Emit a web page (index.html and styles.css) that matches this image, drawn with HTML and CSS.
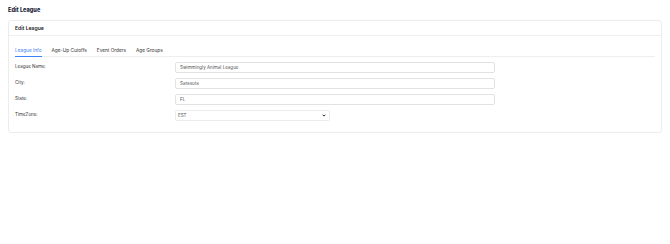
FILE: index.html
```html
<!DOCTYPE html>
<html>
<head>
<meta charset="utf-8">
<link rel="stylesheet" href="styles.css">
</head>
<body>
<h1 class="page-title">Edit League</h1>
<div class="card">
  <div class="card-header">Edit League</div>
  <div class="card-body">
    <div class="tabs">
      <span class="tab active">League Info</span>
      <span class="tab">Age-Up Cutoffs</span>
      <span class="tab">Event Orders</span>
      <span class="tab">Age Groups</span>
    </div>
    <div class="form">
      <div class="row"><label class="label">League Name:</label><div class="input wide">Swimmingly Animal League</div></div>
      <div class="row"><label class="label">City:</label><div class="input wide">Sarasota</div></div>
      <div class="row"><label class="label">State:</label><div class="input wide">FL</div></div>
      <div class="row"><label class="label">TimeZone:</label><div class="input select">EST<svg class="chev" viewBox="0 0 10 6" width="4" height="3"><path d="M1.5 1 L5 4.5 L8.5 1" fill="none" stroke="#222" stroke-width="2.4"/></svg></div></div>
    </div>
  </div>
</div>
</body>
</html>
```
FILE: styles.css
```css
* { box-sizing: border-box; }
body {
  margin: 0;
  padding: 6px 8px;
  font-family: Inter, "Noto Sans", sans-serif;
  background: #fff;
  color: #2b2f36;
}
.page-title {
  margin: 0 0 5px 0;
  font-size: 5.6px;
  line-height: 9px;
  font-weight: 800;
  color: #1a1c3a;
}
.card {
  border: 1px solid #ececec;
  border-radius: 3px;
  background: #fff;
}
.card-header {
  height: 15px;
  padding: 0 6px;
  display: flex;
  align-items: center;
  font-size: 5.1px;
  font-weight: 600;
  color: #222;
  border-bottom: 1px solid #efefef;
}
.card-body {
  padding: 10px 6px 11px 6px;
}
.tabs {
  display: flex;
  border-bottom: 1px solid #eeeeee;
  height: 11px;
  margin-bottom: 5px;
}
.tab {
  font-size: 4.75px;
  color: #333;
  margin-right: 10px;
  line-height: 9px;
  height: 11px;
}
.tab.active {
  color: #3b82f6;
  border-bottom: 1px solid #3b82f6;
}
.form {
  display: flex;
  flex-direction: column;
  gap: 5px;
}
.row {
  display: grid;
  grid-template-columns: 160px 1fr;
  align-items: start;
}
.label {
  font-size: 4.5px;
  color: #333;
  line-height: 10px;
}
.input {
  height: 11px;
  border: 1px solid #e2e2e2;
  border-radius: 2px;
  font-size: 4.5px;
  color: #555;
  padding: 0 4px;
  display: flex;
  align-items: center;
}
.input.wide { width: 320px; }
.input.select {
  width: 155px;
  padding: 0 3px 0 2px;
  justify-content: space-between;
  border-color: #ececec;
}
.chev { display: block; }
```
